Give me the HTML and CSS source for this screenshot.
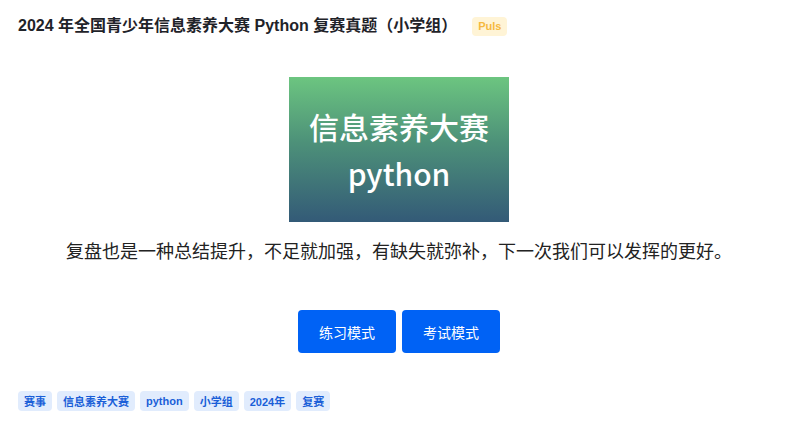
FILE: index.html
```html
<!DOCTYPE html>
<html lang="zh">
<head>
<meta charset="utf-8">
<link rel="stylesheet" href="styles.css">
</head>
<body>
<div class="page">
  <div class="header">
    <h1 class="title">2024 年全国青少年信息素养大赛 Python 复赛真题（小学组）</h1>
    <span class="badge">Puls</span>
  </div>
  <div class="main">
    <div class="cover">
      <div class="cover-line">信息素养大赛</div>
      <div class="cover-line">python</div>
    </div>
    <p class="desc">复盘也是一种总结提升，不足就加强，有缺失就弥补，下一次我们可以发挥的更好。</p>
    <div class="actions">
      <button class="btn">练习模式</button>
      <button class="btn">考试模式</button>
    </div>
  </div>
  <div class="tags">
    <span class="tag">赛事</span>
    <span class="tag">信息素养大赛</span>
    <span class="tag">python</span>
    <span class="tag">小学组</span>
    <span class="tag">2024年</span>
    <span class="tag">复赛</span>
  </div>
</div>
</body>
</html>
```
FILE: styles.css
```css
* { box-sizing: border-box; }
html, body { margin: 0; padding: 0; background: #fff; }
body {
  font-family: "Liberation Sans", "Noto Sans CJK SC", sans-serif;
  color: #1f2329;
}
.page {
  padding: 16px 25px 0 18px;
}
.header {
  display: flex;
  align-items: center;
  gap: 15px;
  height: 20px;
}
.title {
  margin: 0;
  font-size: 16px;
  font-weight: 700;
  color: #1f2329;
  line-height: 20px;
}
.badge {
  display: inline-flex;
  align-items: center;
  height: 19px;
  padding: 0 6px;
  border-radius: 4px;
  background: #fff4d6;
  color: #f5b93e;
  font-size: 11px;
  font-weight: 700;
}
.main {
  display: flex;
  flex-direction: column;
  align-items: center;
  padding-top: 41px;
}
.cover {
  width: 220px;
  height: 145px;
  background: linear-gradient(180deg, #6cc580 0%, #4d9179 45%, #335a77 100%);
  display: flex;
  flex-direction: column;
  align-items: center;
  justify-content: center;
  gap: 4px;
  color: #fff;
  font-family: "Noto Sans CJK SC", sans-serif;
  font-size: 30px;
  font-weight: 500;
  line-height: 43px;
}
.desc {
  margin: 14px 0 0;
  font-family: "Noto Sans CJK SC", sans-serif;
  font-size: 18px;
  line-height: 28px;
  color: #222;
}
.actions {
  display: flex;
  gap: 6px;
  margin-top: 46px;
}
.btn {
  width: 98px;
  height: 43px;
  border: none;
  border-radius: 4px;
  background: #0062f5;
  color: #fff;
  font-family: "Noto Sans CJK SC", sans-serif;
  font-size: 14px;
  padding: 0;
}
.tags {
  display: flex;
  gap: 5px;
  margin-top: 38px;
}
.tag {
  display: inline-flex;
  align-items: center;
  height: 20px;
  padding: 0 6px;
  border-radius: 4px;
  background: #e1ecfd;
  color: #1a5fd8;
  font-size: 11px;
  font-weight: 700;
}
```
